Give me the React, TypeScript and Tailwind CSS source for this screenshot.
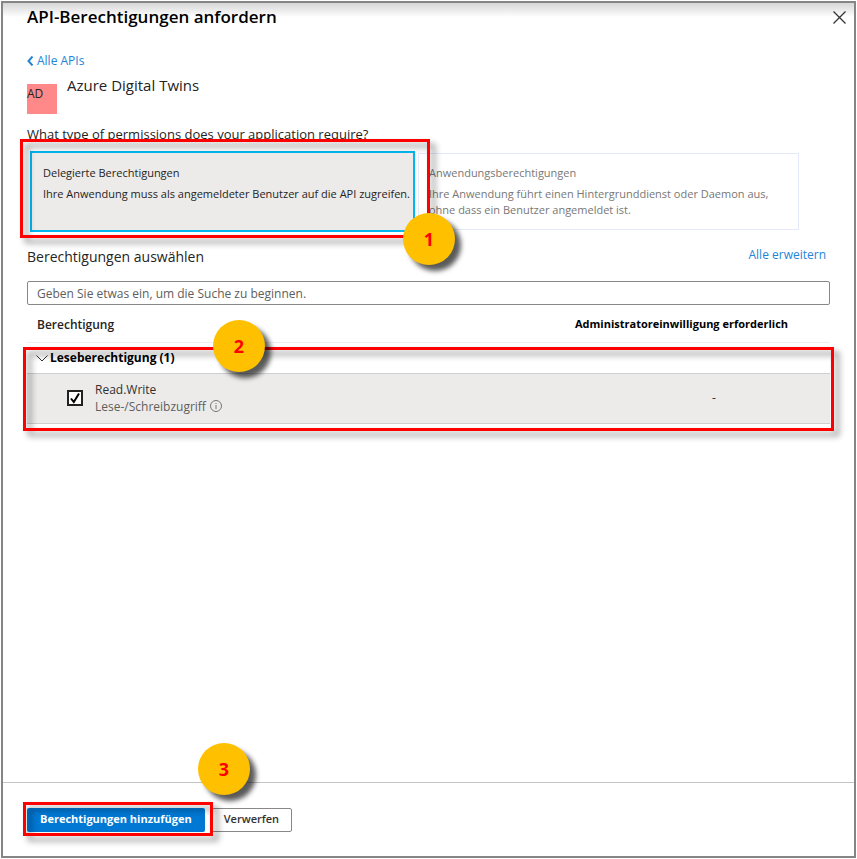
import React from "react";

function Callout({ step, box, badge }: { step: number; box: string; badge: string }) {
  return (
    <div
      aria-hidden="true"
      className={`pointer-events-none absolute ${box}`}
    >
      <div className="absolute inset-0 border-[3px] border-[#ff0000] drop-shadow-[5px_5px_3px_rgba(0,0,0,0.45)]" />
      <div
        className={`absolute flex size-[52px] items-center justify-center rounded-full bg-[#ffc000] text-lg font-bold text-[#ff0000] shadow-[6px_6px_5px_rgba(0,0,0,0.65)] ${badge}`}
      >
        {step}
      </div>
    </div>
  );
}

function PermissionTypes() {
  return (
    <div className="relative mt-2 mr-[31px] grid grid-cols-[385fr_381fr] items-center gap-[3px] pl-[3px]">
      <button
        type="button"
        aria-pressed="true"
        className="h-[81px] min-w-0 border-2 border-[#00b7f0] bg-[#ecebea] px-[11px] pb-4 text-left text-[11px] leading-4 text-[#252423]"
      >
        <span className="block">Delegierte Berechtigungen</span>
        <span className="mt-[5px] block whitespace-nowrap">
          Ihre Anwendung muss als angemeldeter Benutzer auf die API zugreifen.
        </span>
      </button>
      <button
        type="button"
        aria-pressed="false"
        className="h-[77px] min-w-0 border border-[#e3e8fb] bg-white px-[10px] text-left text-[11px] leading-4 text-[#787776]"
      >
        <span className="block">Anwendungsberechtigungen</span>
        <span className="mt-[5px] block">
          Ihre Anwendung führt einen Hintergrunddienst oder Daemon aus,
          <br />
          ohne dass ein Benutzer angemeldet ist.
        </span>
      </button>
      <Callout
        step={1}
        box="-top-3 -left-[7px] h-[99px] w-[410px]"
        badge="-right-[25px] -bottom-[27px]"
      />
    </div>
  );
}

function PermissionTable() {
  return (
    <div className="relative">
      <table className="w-full border-collapse text-left text-xs">
        <thead>
          <tr className="h-[37px] border-b border-[#eeeeee] text-[#252423]">
            <th className="pt-[3px] pl-[10px] font-semibold" scope="col">Berechtigung</th>
            <th className="w-[255px] pt-[3px] text-[11px] font-bold text-black" scope="col">
              Administratoreinwilligung erforderlich
            </th>
          </tr>
        </thead>
        <tbody>
          <tr className="h-[31px]">
            <th colSpan={2} scope="rowgroup" className="pt-px pl-2 font-bold text-black">
              <button type="button" aria-expanded="true" className="flex items-center gap-px">
                <svg width="14" height="9" viewBox="0 0 14 9" fill="none" stroke="#333" aria-hidden="true">
                  <path d="M1.500 1.500 7 7l5.500-5.500" />
                </svg>
                Leseberechtigung (1)
              </button>
            </th>
          </tr>
          <tr className="h-[50px] border-y border-[#cfcfcf] bg-[#ecebea] text-[#323130]">
            <td className="pb-px pl-10">
              <div className="flex items-center gap-3">
                <span className="relative flex size-4">
                  <input
                    id="read-write"
                    type="checkbox"
                    defaultChecked
                    className="peer size-4 appearance-none border-2 border-[#222] bg-white"
                  />
                  <svg
                    className="pointer-events-none absolute inset-0 hidden peer-checked:block"
                    width="16"
                    height="16"
                    viewBox="0 0 16 16"
                    fill="none"
                    stroke="#000"
                    strokeWidth="2"
                    aria-hidden="true"
                  >
                    <path d="M4 8.500 6.800 12 12 3.500" />
                  </svg>
                </span>
                <div className="leading-[17px]">
                  <label htmlFor="read-write" className="block">Read.Write</label>
                  <span className="flex items-center gap-1 text-[#605e5c]">
                    Lese-/Schreibzugriff
                    <svg width="12" height="12" viewBox="0 0 12 12" fill="none" stroke="#777" aria-hidden="true">
                      <circle cx="6" cy="6" r="5.500" />
                      <path d="M6 5v4M6 3v1" />
                    </svg>
                  </span>
                </div>
              </div>
            </td>
            <td className="pl-[137px]">-</td>
          </tr>
        </tbody>
      </table>
      <Callout
        step={2}
        box="top-[42px] -right-1 -bottom-[7px] -left-1"
        badge="-top-[27px] left-[190px]"
      />
    </div>
  );
}

export default function App() {
  return (
    <div className="flex min-h-screen bg-white p-px font-['Open_Sans','Noto_Sans',sans-serif] text-[#252423]">
      <section className="flex flex-1 flex-col border-2 border-[#858585]">
        <header className="flex h-7 items-center justify-between bg-linear-to-b from-[#d6d6d6] to-white to-50% pr-2 pl-6">
          <h1 className="text-[17px] leading-6 font-semibold text-black">API-Berechtigungen anfordern</h1>
          <button type="button" aria-label="Schließen" className="size-[13px]">
            <svg width="13" height="13" viewBox="0 0 13 13" fill="none" stroke="#333" strokeWidth="1.300" aria-hidden="true">
              <path d="m.5.500 12 12M12.500.500l-12 12" />
            </svg>
          </button>
        </header>
        <main className="flex-1 px-6 pt-[22px]">
          <a href="#apis" className="flex w-fit items-center gap-[3px] text-xs leading-4 text-[#2484d8]">
            <svg width="7" height="10" viewBox="0 0 7 10" fill="none" stroke="currentColor" strokeWidth="2" aria-hidden="true">
              <path d="M5.500 0.500 1.500 5l4 4.500" />
            </svg>
            Alle APIs
          </a>
          <div className="mt-[6px] flex gap-[10px]">
            <div className="mt-[9px] size-[30px] bg-[#ff8989] text-xs leading-5">AD</div>
            <h2 className="text-[15px] leading-5">Azure Digital Twins</h2>
          </div>
          <p className="mt-[11px] text-[13px] leading-[18px]">
            What type of permissions does your application require?
          </p>
          <PermissionTypes />
          <div className="mt-[15px] flex items-start justify-between pr-1">
            <h2 className="text-sm leading-5">Berechtigungen auswählen</h2>
            <button type="button" className="text-xs leading-4 text-[#2484d8]">Alle erweitern</button>
          </div>
          <input
            type="search"
            aria-label="Berechtigungen suchen"
            placeholder="Geben Sie etwas ein, um die Suche zu beginnen."
            className="mt-[14px] block h-6 w-full rounded-xs border border-[#8a8886] px-[9px] text-xs placeholder:text-[#605e5c]"
          />
          <PermissionTable />
        </main>
        <footer className="flex h-[74px] items-center gap-[6px] border-t border-[#c4c4c4] px-6">
          <div className="relative">
            <button
              type="button"
              className="block h-6 rounded-xs bg-[#0078d4] px-[13px] text-[11px] font-bold text-white"
            >
              Berechtigungen hinzufügen
            </button>
            <Callout
              step={3}
              box="-top-[6px] -right-2 -bottom-1 -left-1"
              badge="-top-[59px] left-[175px]"
            />
          </div>
          <button
            type="button"
            className="h-6 rounded-xs border border-[#8a8886] px-3 text-[11px] font-semibold text-[#323130]"
          >
            Verwerfen
          </button>
        </footer>
      </section>
    </div>
  );
}
